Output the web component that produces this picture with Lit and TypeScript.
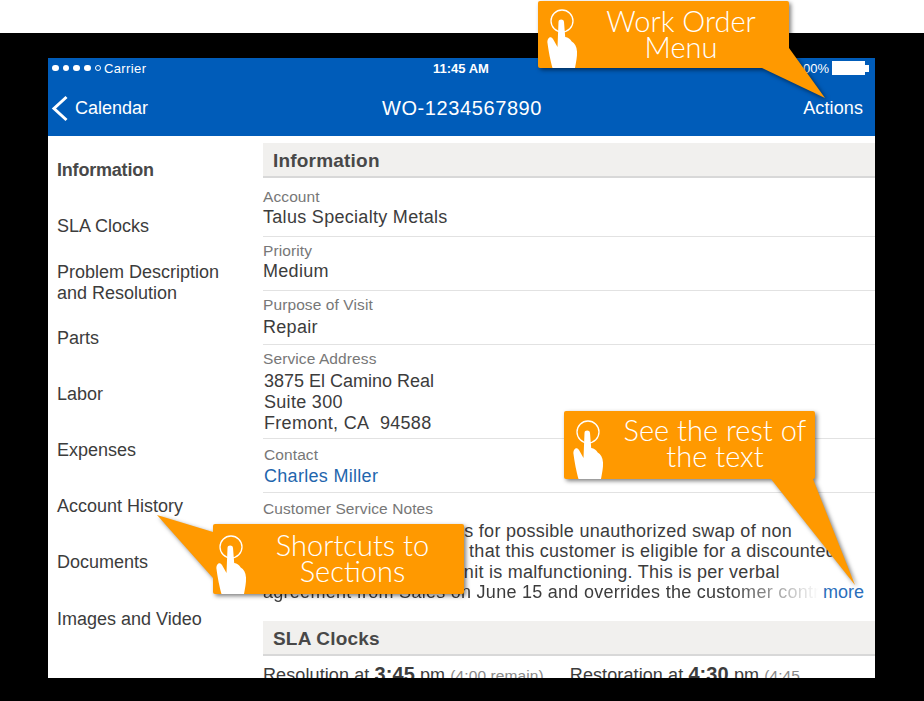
import { LitElement, html, svg, css } from 'lit';
import { customElement, property } from 'lit/decorators.js';

@customElement('tip-callout')
export class TipCallout extends LitElement {
  @property({ type: Number }) left = 0;
  @property({ type: Number }) top = 0;
  @property({ type: Number }) boxWidth = 251;
  @property({ type: Number }) boxHeight = 68;
  // tail polygon, in coordinates relative to the box
  @property() tail = '';
  @property({ type: Array }) lines: string[] = [];
  @property({ type: Number }) handX = 0;
  @property({ type: Number }) handY = 0;
  @property({ type: Number }) textCenter = 143;
  @property({ type: Number }) textTop = 7;

  render() {
    const w = this.boxWidth;
    const h = this.boxHeight;
    return html`
      <div class="tip" style="left:${this.left}px;top:${this.top}px;width:${w}px;height:${h}px">
        <svg class="shape" width=${w} height=${h} viewBox="0 0 ${w} ${h}">
          <g>
            <rect width=${w} height=${h} rx="2" fill="#ff9900"></rect>
            ${svg`<polygon points=${this.tail} fill="#ff9900"></polygon>`}
          </g>
        </svg>
        <svg
          class="hand"
          style="left:${this.handX}px;top:${this.handY}px"
          width="42"
          height="67"
          viewBox="0 0 42 67"
        >
          <circle cx="24" cy="20" r="11" fill="none" stroke="#fff" stroke-width="1.300"></circle>
          <path
            fill="#fff"
            d="M20.500 21c0-3.200 5.300-3.200 5.500 0l1.200 15c3 .5 5 2 6.500 4.500 3 1.500 5 5 5.300 10 .3 5-1 11-2 16.500H14.500C12.500 60 10.500 50 9.500 42c-.6-5 3-8 5.500-4l4.500 8z"
          ></path>
        </svg>
        <div class="label" style="width:${this.textCenter * 2}px;top:${this.textTop}px">
          ${this.lines.map((l) => html`<div>${l}</div>`)}
        </div>
      </div>
    `;
  }

  static styles = css`
    .tip {
      position: absolute;
    }
    .shape {
      position: absolute;
      inset: 0;
      overflow: visible;
      filter: drop-shadow(2px 2px 2px rgba(0, 0, 0, 0.5));
    }
    .hand {
      position: absolute;
    }
    .label {
      position: absolute;
      left: 0;
      color: #fff;
      font-family: Lato, sans-serif;
      font-weight: 300;
      font-size: 29px;
      line-height: 26px;
      text-align: center;
      white-space: nowrap;
    }
  `;
}

const NAV = [
  'Information',
  'SLA Clocks',
  'Problem Description and Resolution',
  'Parts',
  'Labor',
  'Expenses',
  'Account History',
  'Documents',
  'Images and Video',
];

@customElement('app-root')
export class AppRoot extends LitElement {
  render() {
    return html`
      <div class="page">
        <div class="frame">
          <div class="screen">
            <header class="bar">
              <div class="status">
                <div class="signal">
                  <i></i><i></i><i></i><i></i><i class="off"></i>
                  <span>Carrier</span>
                </div>
                <div class="time">11:45 AM</div>
                <div class="power">
                  <span>100%</span>
                  <b class="battery"></b>
                </div>
              </div>
              <div class="nav">
                <div class="back">
                  <svg width="17" height="27" viewBox="0 0 17 27">
                    <path d="M15.500 2 3 13.500 15.500 25" fill="none" stroke="#fff" stroke-width="3"></path>
                  </svg>
                  <span>Calendar</span>
                </div>
                <div class="title">WO-1234567890</div>
                <div class="action">Actions</div>
              </div>
            </header>
            <div class="body">
              <nav class="side">
                ${NAV.map((n, i) => html`<div class="side-item ${i === 0 ? 'active' : ''}"><span>${n}</span></div>`)}
              </nav>
              <main class="content">
                <h2 class="section">Information</h2>
                <div class="row first">
                  <div class="label">Account</div>
                  <div class="value">Talus Specialty Metals</div>
                </div>
                <div class="row">
                  <div class="label">Priority</div>
                  <div class="value">Medium</div>
                </div>
                <div class="row visit">
                  <div class="label">Purpose of Visit</div>
                  <div class="value gap">Repair</div>
                </div>
                <div class="row address">
                  <div class="label">Service Address</div>
                  <div class="value gap nudge"><span class="tight">3875 El Camino Real</span><br />Suite 300<br />Fremont, CA&nbsp; 94588</div>
                </div>
                <div class="row contact">
                  <div class="label nudge">Contact</div>
                  <div class="value nudge link">Charles Miller</div>
                </div>
                <div class="row notes">
                  <div class="label">Customer Service Notes</div>
                  <div class="note-lines">
                    <div class="value">Check the serial numbers for possible unauthorized swap of non</div>
                    <div class="value">serialized parts. Confirm that this customer is eligible for a discounted</div>
                    <div class="value">replacement part if the unit is malfunctioning. This is per verbal</div>
                    <div class="last">
                      <div class="value fade">agreement from Sales on June 15 and overrides the customer contract</div>
                      <span class="more">more</span>
                    </div>
                  </div>
                </div>
                <h2 class="section">SLA Clocks</h2>
                <div class="clocks">
                  <span>Resolution at <b>3:45</b> pm <em>(4:00 remain)</em></span>
                  <span>Restoration at <b>4:30</b> pm <em>(4:45</em></span>
                </div>
              </main>
            </div>
          </div>
        </div>
        <tip-callout
          .left=${538}
          .top=${1}
          .boxHeight=${67}
          tail="224,67 287,97 251,47"
          .textCenter=${143}
          .textTop=${6.5}
          .lines=${['Work Order', 'Menu']}
        ></tip-callout>
        <tip-callout
          .left=${564}
          .top=${411}
          .boxHeight=${68}
          tail="207,68 291,174 249,68"
          .handY=${1}
          .textCenter=${151}
          .textTop=${5.5}
          .lines=${['See the rest of', 'the text']}
        ></tip-callout>
        <tip-callout
          .left=${213}
          .top=${524}
          .boxHeight=${70}
          tail="0,8 -56,-9 0,54"
          .handX=${-6}
          .handY=${3}
          .textCenter=${139.5}
          .textTop=${7.5}
          .lines=${['Shortcuts to', 'Sections']}
        ></tip-callout>
      </div>
    `;
  }

  static styles = css`
    :host {
      display: block;
      font-family: 'Liberation Sans', Arial, sans-serif;
    }
    .page {
      position: relative;
      width: 924px;
      height: 701px;
      background: #fff;
      overflow: hidden;
    }
    .frame {
      position: absolute;
      inset: 33px 0 0 0;
      background: #000;
      padding: 25px 49px 23px 48px;
      box-sizing: border-box;
    }
    .screen {
      height: 620px;
      background: #fff;
      overflow: hidden;
      display: flex;
      flex-direction: column;
    }
    .bar {
      height: 78px;
      flex: none;
      background: #005cb9;
      color: #fff;
    }
    .status {
      height: 20px;
      padding: 0 5px 0 4px;
      display: grid;
      grid-template-columns: 1fr auto 1fr;
      align-items: center;
      font-size: 13px;
    }
    .signal {
      display: flex;
      align-items: center;
      gap: 4.200px;
    }
    .signal i {
      width: 6.500px;
      height: 6.500px;
      border-radius: 50%;
      background: #fff;
    }
    .signal i.off {
      width: 4px;
      height: 4px;
      background: none;
      border: 1px solid #fff;
    }
    .signal span {
      margin-left: -1px;
      letter-spacing: 0.4px;
    }
    .time {
      font-weight: 700;
      font-size: 13px;
    }
    .power {
      display: flex;
      justify-content: flex-end;
      align-items: center;
      gap: 3px;
    }
    .battery {
      position: relative;
      width: 33px;
      height: 14px;
      background: #fff;
      margin-right: 5px;
    }
    .battery::after {
      content: '';
      position: absolute;
      left: 33px;
      top: 4px;
      width: 4px;
      height: 7px;
      background: #fff;
    }
    .nav {
      height: 58px;
      padding: 2px 12px 0;
      box-sizing: border-box;
      display: grid;
      grid-template-columns: 1fr auto 1fr;
      align-items: center;
    }
    .back {
      display: flex;
      align-items: center;
      gap: 7px;
      margin-left: -9px;
      font-size: 18px;
    }
    .title {
      font-size: 20px;
      letter-spacing: 0.6px;
      margin-left: 1px;
    }
    .action {
      text-align: right;
      font-size: 18px;
      letter-spacing: 0.1px;
    }
    .body {
      flex: 1;
      display: flex;
      min-height: 0;
    }
    .side {
      width: 215px;
      flex: none;
      padding: 6px 0 0 9px;
      box-sizing: border-box;
      color: #3c3c3c;
      font-size: 18px;
      line-height: 21px;
    }
    .side-item {
      height: 56.150px;
      display: flex;
      align-items: center;
      padding-right: 22px;
    }
    .side-item:nth-child(3) {
      height: 76px;
      margin: -9px 0 -11px;
    }
    .side-item.active {
      font-weight: 700;
      letter-spacing: -0.2px;
      color: #484848;
    }
    .content {
      flex: 1;
      min-width: 0;
      padding-top: 7px;
      color: #3c3c3c;
    }
    .section {
      margin: 0;
      height: 33px;
      line-height: 35px;
      padding-left: 10px;
      background: #f1f0ee;
      border-bottom: 2px solid #d8d8d8;
      font-size: 19px;
      font-weight: 700;
      letter-spacing: 0.2px;
      color: #484848;
    }
    .row {
      padding: 4px 0 8px 0;
      border-bottom: 1px solid #e2e2e2;
    }
    .row.first {
      padding-top: 9px;
    }
    .row.visit {
      padding-bottom: 6px;
    }
    .row.address {
      padding-bottom: 4px;
    }
    .row.contact {
      padding-top: 6px;
      padding-bottom: 5px;
    }
    .row.contact .value {
      margin-top: 1px;
    }
    .row.notes {
      border-bottom: 0;
      padding-top: 6px;
      padding-bottom: 16px;
    }
    .note-lines {
      height: 84px;
      margin-top: 2px;
    }
    .note-lines .value,
    .last {
      line-height: 20.300px;
      letter-spacing: 0.27px;
    }
    .label {
      font-size: 15.500px;
      line-height: 20px;
      letter-spacing: 0.1px;
      color: #777;
    }
    .value {
      font-size: 18px;
      line-height: 21px;
      letter-spacing: 0.3px;
      white-space: nowrap;
    }
    .value.gap {
      margin-top: 2px;
    }
    .nudge {
      padding-left: 1px;
    }
    .tight {
      letter-spacing: 0;
    }
    .link {
      color: #1f66ad;
    }
    .last {
      display: flex;
      align-items: baseline;
      padding-right: 11px;
    }
    .fade {
      flex: 1;
      min-width: 0;
      overflow: hidden;
      -webkit-mask-image: linear-gradient(to right, #000 84%, transparent 100%);
      mask-image: linear-gradient(to right, #000 84%, transparent 100%);
    }
    .more {
      margin-left: 4px;
      font-size: 18px;
      letter-spacing: 0;
      color: #2a6ebb;
    }
    .clocks {
      display: flex;
      gap: 26px;
      padding-top: 8px;
      font-size: 18px;
      line-height: 21px;
      letter-spacing: 0.1px;
      white-space: nowrap;
    }
    .clocks b {
      font-size: 20px;
    }
    .clocks em {
      font-style: normal;
      font-size: 15.500px;
      color: #888;
    }
  `;
}

declare global {
  interface HTMLElementTagNameMap {
    'app-root': AppRoot;
    'tip-callout': TipCallout;
  }
}
